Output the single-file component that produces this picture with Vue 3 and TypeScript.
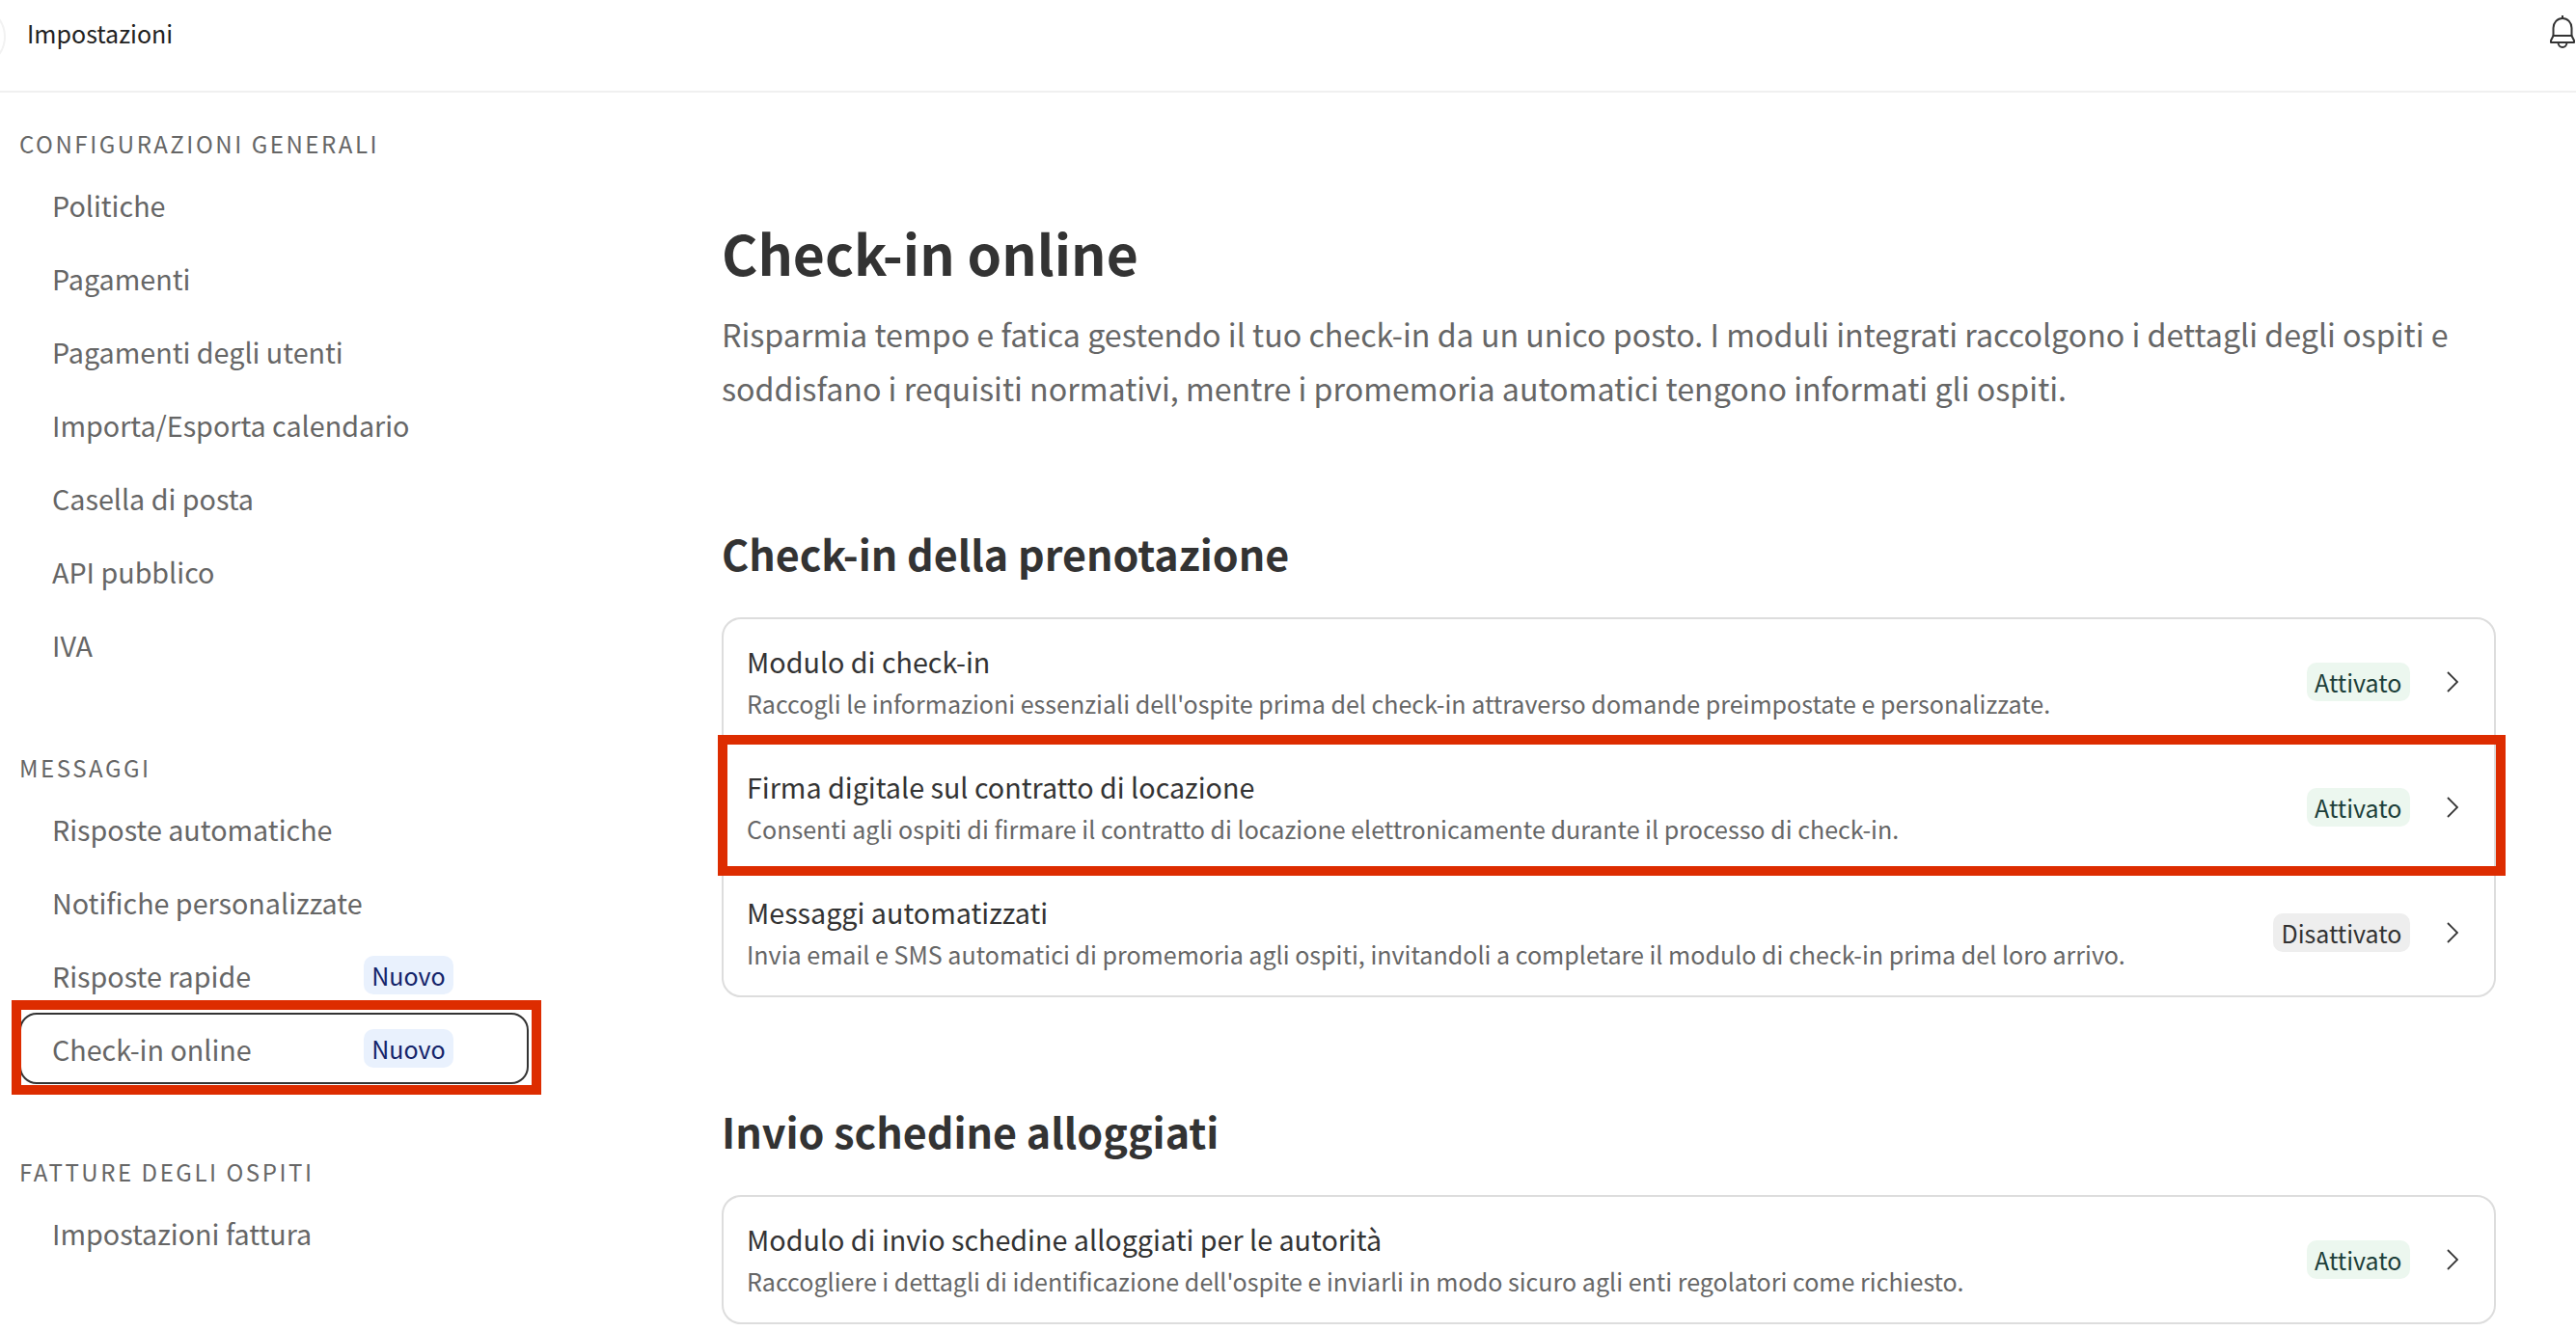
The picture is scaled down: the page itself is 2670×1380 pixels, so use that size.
<script setup lang="ts">
interface NavItem {
  label: string
  isNew?: boolean
  active?: boolean
}

interface NavGroup {
  title: string
  items: NavItem[]
}

interface Row {
  title: string
  text: string
  on: boolean
  marked?: boolean
}

const groups: NavGroup[] = [
  {
    title: 'Configurazioni generali',
    items: [
      { label: 'Politiche' },
      { label: 'Pagamenti' },
      { label: 'Pagamenti degli utenti' },
      { label: 'Importa/Esporta calendario' },
      { label: 'Casella di posta' },
      { label: 'API pubblico' },
      { label: 'IVA' }
    ]
  },
  {
    title: 'Messaggi',
    items: [
      { label: 'Risposte automatiche' },
      { label: 'Notifiche personalizzate' },
      { label: 'Risposte rapide', isNew: true },
      { label: 'Check-in online', isNew: true, active: true }
    ]
  },
  {
    title: 'Fatture degli ospiti',
    items: [{ label: 'Impostazioni fattura' }]
  }
]

const bookingRows: Row[] = [
  {
    title: 'Modulo di check-in',
    text: "Raccogli le informazioni essenziali dell'ospite prima del check-in attraverso domande preimpostate e personalizzate.",
    on: true
  },
  {
    title: 'Firma digitale sul contratto di locazione',
    text: 'Consenti agli ospiti di firmare il contratto di locazione elettronicamente durante il processo di check-in.',
    on: true,
    marked: true
  },
  {
    title: 'Messaggi automatizzati',
    text: 'Invia email e SMS automatici di promemoria agli ospiti, invitandoli a completare il modulo di check-in prima del loro arrivo.',
    on: false
  }
]

const lodgingRows: Row[] = [
  {
    title: 'Modulo di invio schedine alloggiati per le autorità',
    text: "Raccogliere i dettagli di identificazione dell'ospite e inviarli in modo sicuro agli enti regolatori come richiesto.",
    on: true
  }
]

const sections = [
  { title: 'Check-in della prenotazione', rows: bookingRows },
  { title: 'Invio schedine alloggiati', rows: lodgingRows }
]
</script>

<template>
  <div class="page">
    <header class="topbar">
      <span class="avatar"></span>
      <span class="crumb">Impostazioni</span>
      <svg class="bell" viewBox="0 0 26 34" fill="none" stroke="#333" stroke-width="2">
        <path d="M13 0v3" />
        <path d="M3.5 21v-8a9.5 10 0 0 1 19 0v8" />
        <path d="M3.5 21h19l2.5 5v2H1v-2z" stroke-linejoin="round" />
        <path d="M8.5 28a4.5 5 0 0 0 9 0" />
      </svg>
    </header>

    <div class="body">
      <nav class="sidebar">
        <section v-for="group in groups" :key="group.title" class="group">
          <h3 class="group-title">{{ group.title }}</h3>
          <a
            v-for="item in group.items"
            :key="item.label"
            :class="['nav-item', { active: item.active }]"
          >
            <span class="nav-label">{{ item.label }}</span>
            <span v-if="item.isNew" class="new-badge">Nuovo</span>
            <span v-if="item.active" class="mark mark-nav"></span>
          </a>
        </section>
      </nav>

      <main class="content">
        <h1 class="title">Check-in online</h1>
        <p class="lead">
          Risparmia tempo e fatica gestendo il tuo check-in da un unico posto. I moduli integrati raccolgono i dettagli degli ospiti e soddisfano i requisiti normativi, mentre i promemoria automatici tengono informati gli ospiti.
        </p>

        <section v-for="section in sections" :key="section.title" class="block">
          <h2 class="block-title">{{ section.title }}</h2>
          <div class="card">
            <div v-for="row in section.rows" :key="row.title" class="row">
              <div class="row-text">
                <div class="row-title">{{ row.title }}</div>
                <div class="row-desc">{{ row.text }}</div>
              </div>
              <span :class="['status', row.on ? 'on' : 'off']">{{ row.on ? 'Attivato' : 'Disattivato' }}</span>
              <svg class="chevron" viewBox="0 0 12 22" fill="none" stroke="#333" stroke-width="1.8">
                <path d="M1 1l10 10L1 21" />
              </svg>
              <span v-if="row.marked" class="mark mark-row"></span>
            </div>
          </div>
        </section>
      </main>
    </div>
  </div>
</template>

<style>
html,
body {
  margin: 0;
  background: #fff;
  overflow: hidden;
}
</style>

<style scoped>
.page {
  width: 2670px;
  height: 1380px;
  overflow: hidden;
  font-family: "Noto Sans CJK SC", "Open Sans", sans-serif;
  color: #333;
  background: #fff;
}

.topbar {
  position: relative;
  display: flex;
  align-items: center;
  justify-content: space-between;
  box-sizing: border-box;
  height: 96px;
  padding: 0 1px 26px 28px;
  border-bottom: 2px solid #f0f0f0;
}

.avatar {
  position: absolute;
  left: -58px;
  top: 6px;
  width: 60px;
  height: 60px;
  border: 2px solid #f2f2f2;
  border-radius: 50%;
}

.crumb {
  font-size: 25px;
  line-height: 36px;
  color: #222;
}

.bell {
  width: 26px;
  height: 34px;
  margin-top: -2px;
}

.body {
  display: flex;
}

.sidebar {
  flex: none;
  width: 748px;
  box-sizing: border-box;
  padding: 35px 0 0 20px;
}

.group {
  width: 528px;
  margin-bottom: 73px;
}

.group-title {
  margin: 0 0 8px;
  font-size: 24px;
  line-height: 36px;
  font-weight: 400;
  letter-spacing: 2.55px;
  text-transform: uppercase;
  color: #666;
}

.nav-item {
  position: relative;
  display: flex;
  align-items: center;
  box-sizing: border-box;
  height: 74px;
  margin-bottom: 2px;
  padding-left: 32px;
  border: 2px solid transparent;
  border-radius: 18px;
  font-size: 28.7px;
  color: #666;
}

.nav-item.active {
  border-color: #333;
}

.nav-label {
  width: 323px;
  flex: none;
  white-space: nowrap;
}

.new-badge {
  display: flex;
  align-items: center;
  justify-content: center;
  width: 93px;
  height: 40px;
  border-radius: 10px;
  background: #e9f1fd;
  color: #14246a;
  font-size: 25px;
}

.mark {
  position: absolute;
  border: 10px solid #dd2c00;
  pointer-events: none;
}

.mark-nav {
  top: -15px;
  left: -10px;
  width: 529px;
  height: 78px;
}

.mark-row {
  top: -10px;
  left: -6px;
  right: -12px;
  bottom: -6px;
}

.content {
  flex: 1;
  min-width: 0;
  padding: 0 83px 0 0;
}

.title {
  margin: 122px 0 0;
  font-size: 57px;
  line-height: 86px;
  font-weight: 700;
}

.lead {
  margin: 14px 0 0;
  font-size: 32.2px;
  line-height: 56px;
  color: #666;
}

.block {
  margin-top: 111px;
}

.block + .block {
  margin-top: 106px;
}

.block-title {
  margin: 0 0 35px;
  font-size: 43px;
  line-height: 64px;
  font-weight: 700;
}

.card {
  border: 2px solid #ddd;
  border-radius: 20px;
}

.row {
  position: relative;
  display: flex;
  align-items: center;
  height: 130px;
  padding: 0 37px 0 24px;
}

.row-text {
  flex: 1;
  min-width: 0;
}

.row-title {
  font-size: 28.7px;
  line-height: 44px;
  color: #333;
}

.row-desc {
  font-size: 25.05px;
  line-height: 42px;
  color: #666;
}

.status {
  height: 40px;
  line-height: 40px;
  padding: 0 8.5px;
  border-radius: 10px;
  font-size: 25px;
}

.status.on {
  background: #ecf7ef;
  color: #1d3f3a;
}

.status.off {
  background: #eee;
  color: #333;
}

.chevron {
  width: 12px;
  height: 22px;
  margin-left: 38px;
}
</style>
